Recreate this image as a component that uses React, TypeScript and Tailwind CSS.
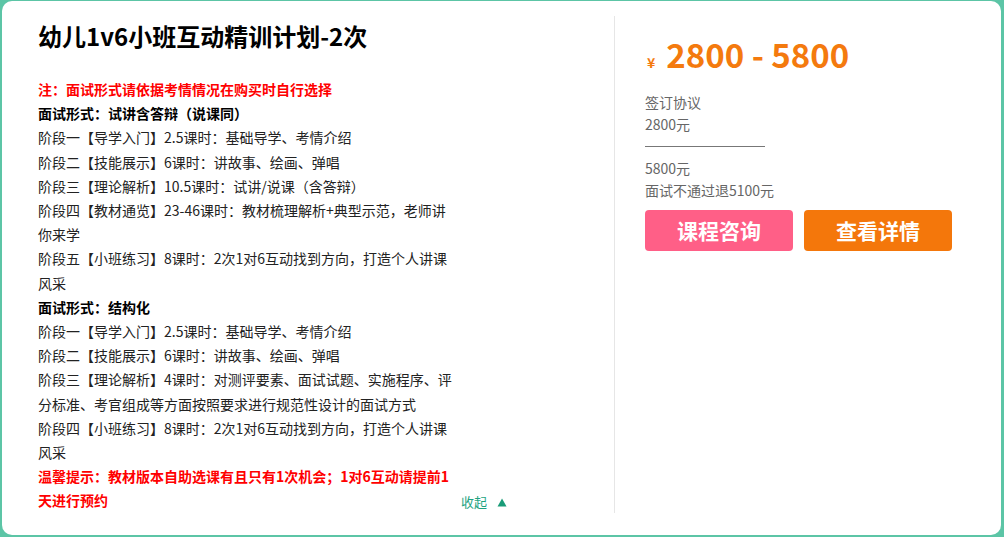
import React from 'react'

const font = { fontFamily: '"Noto Sans CJK SC", "Liberation Sans", sans-serif' }

const App = () => {
  return (
    <div className="h-[537px] w-[1004px] bg-[#5cc5a6] pb-[2px] pl-[2px] pr-[3px] pt-[1px]" style={font}>
      <div className="flex h-full rounded-[10px] bg-white">
        {/* 左侧：课程介绍 */}
        <div className="w-[612px] shrink-0 pl-[36px] pt-[18px]">
          <h1 className="text-[24px] font-bold leading-[34px] text-black">幼儿1v6小班互动精训计划-2次</h1>

          <div className="mt-[24px] flex items-end text-[14px] leading-[24.2px] text-[#222]">
            <div className="w-[423px] shrink-0 whitespace-nowrap">
              <p className="font-bold text-[#ff0000]">注：面试形式请依据考情情况在购买时自行选择</p>
              <p className="font-bold text-black">面试形式：试讲含答辩（说课同）</p>
              <p>阶段一【导学入门】2.5课时：基础导学、考情介绍</p>
              <p>阶段二【技能展示】6课时：讲故事、绘画、弹唱</p>
              <p>阶段三【理论解析】10.5课时：试讲/说课（含答辩）</p>
              <p>
                阶段四【教材通览】23-46课时：教材梳理解析+典型示范，老师讲
                <br />
                你来学
              </p>
              <p>
                阶段五【小班练习】8课时：2次1对6互动找到方向，打造个人讲课
                <br />
                风采
              </p>
              <p className="font-bold text-black">面试形式：结构化</p>
              <p>阶段一【导学入门】2.5课时：基础导学、考情介绍</p>
              <p>阶段二【技能展示】6课时：讲故事、绘画、弹唱</p>
              <p>
                阶段三【理论解析】4课时：对测评要素、面试试题、实施程序、评
                <br />
                分标准、考官组成等方面按照要求进行规范性设计的面试方式
              </p>
              <p>
                阶段四【小班练习】8课时：2次1对6互动找到方向，打造个人讲课
                <br />
                风采
              </p>
              <p className="font-bold text-[#ff0000]">
                温馨提示：教材版本自助选课有且只有1次机会；1对6互动请提前1
                <br />
                天进行预约
              </p>
            </div>
            <button className="mb-[-2px] flex items-center gap-[10px] text-[13px] text-[#1ea381]">
              收起
              <svg width="10" height="9" viewBox="0 0 10 9">
                <path d="M5 0.5 L9.5 8.5 L0.5 8.5 Z" fill="#1a9c78" />
              </svg>
            </button>
          </div>
        </div>

        {/* 右侧：价格与操作 */}
        <div className="mt-[15px] h-[497px] flex-1 border-l border-[#e6e6e6] pl-[30px] pt-[18px]">
          <div className="flex items-baseline text-[#f47a0e]">
            <span className="mr-[11px] pl-[2px] text-[14px] font-bold">¥</span>
            <span className="text-[33px] font-bold leading-[40px]">2800 - 5800</span>
          </div>

          <div className="mt-[17px] text-[14px] leading-[22px] text-[#666]">
            <p>签订协议</p>
            <p>2800元</p>
            <div className="flex h-[22px] items-center">
              <div className="h-px w-[120px] bg-[#777]" />
            </div>
            <p>5800元</p>
            <p>面试不通过退5100元</p>
          </div>

          <div className="mt-[9px] flex gap-[11px]">
            <button className="h-[41px] w-[148px] rounded-[4px] bg-[#ff5f87] text-[21px] font-bold text-white">
              课程咨询
            </button>
            <button className="h-[41px] w-[148px] rounded-[4px] bg-[#f4770b] text-[21px] font-bold text-white">
              查看详情
            </button>
          </div>
        </div>
      </div>
    </div>
  )
}

export default App
